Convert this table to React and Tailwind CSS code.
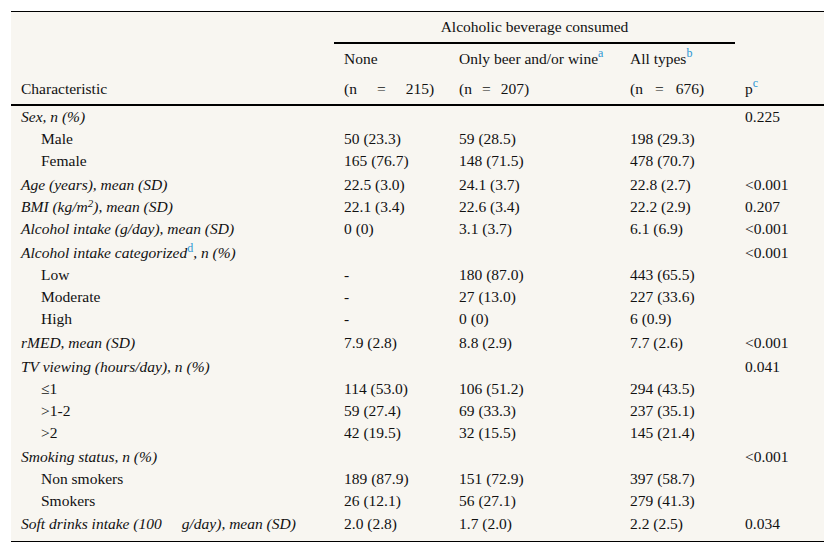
// Beverage table
const rows = [
    {label: "Sex, n (%)", italic: true, p: "0.225"},
    {label: "Male", v: ["50 (23.3)", "59 (28.5)", "198 (29.3)"]},
    {label: "Female", v: ["165 (76.7)", "148 (71.5)", "478 (70.7)"]},
    {label: "Age (years), mean (SD)", italic: true, gap: true, v: ["22.5 (3.0)", "24.1 (3.7)", "22.8 (2.7)"], p: "<0.001"},
    {label: <>BMI (kg/m<sup className="text-[11px]">2</sup>), mean (SD)</>, italic: true, v: ["22.1 (3.4)", "22.6 (3.4)", "22.2 (2.9)"], p: "0.207"},
    {label: "Alcohol intake (g/day), mean (SD)", italic: true, v: ["0 (0)", "3.1 (3.7)", "6.1 (6.9)"], p: "<0.001"},
    {label: <>Alcohol intake categorized<Note>d</Note>, n (%)</>, italic: true, gap: true, p: "<0.001"},
    {label: "Low", v: ["-", "180 (87.0)", "443 (65.5)"]},
    {label: "Moderate", v: ["-", "27 (13.0)", "227 (33.6)"]},
    {label: "High", v: ["-", "0 (0)", "6 (0.9)"]},
    {label: "rMED, mean (SD)", italic: true, gap: true, v: ["7.9 (2.8)", "8.8 (2.9)", "7.7 (2.6)"], p: "<0.001"},
    {label: "TV viewing (hours/day), n (%)", italic: true, gap: true, p: "0.041"},
    {label: "≤1", v: ["114 (53.0)", "106 (51.2)", "294 (43.5)"]},
    {label: ">1-2", v: ["59 (27.4)", "69 (33.3)", "237 (35.1)"]},
    {label: ">2", v: ["42 (19.5)", "32 (15.5)", "145 (21.4)"]},
    {label: "Smoking status, n (%)", italic: true, gap: true, p: "<0.001"},
    {label: "Non smokers", v: ["189 (87.9)", "151 (72.9)", "397 (58.7)"]},
    {label: "Smokers", v: ["26 (12.1)", "56 (27.1)", "279 (41.3)"]},
    {label: <>Soft drinks intake (100<span className="ml-[20px]">g/day), mean (SD)</span></>, italic: true, last: true, v: ["2.0 (2.8)", "1.7 (2.0)", "2.2 (2.5)"], p: "0.034"},
]

function Note({children}) {
    return <sup className="text-[12px] not-italic text-[#2a95d3]">{children}</sup>
}

const cols = "grid grid-cols-[323px_115px_171px_115px_89px]"

export default function App() {
    return (
        <div className="min-h-[553px] bg-white pt-[11px] pl-[11px] font-[family-name:Liberation_Serif,serif] text-[15.5px] text-[#111]">
            <div className="w-[813px] bg-[#f8f6f1] border-t border-b border-black">
                {/* header */}
                <div className={`${cols} border-b-2 border-black`}>
                    <div/>
                    <div className="col-span-3 h-[32px] border-b-2 border-black flex items-center justify-center">
                        Alcoholic beverage consumed
                    </div>
                    <div/>

                    <div className="h-[30px]"/>
                    <div className="h-[30px] flex items-center pl-[10px]">None</div>
                    <div className="h-[30px] flex items-center pl-[10px]">Only beer and/or wine<Note>a</Note></div>
                    <div className="h-[30px] flex items-center pl-[10px]">All types<Note>b</Note></div>
                    <div/>

                    <div className="h-[30px] flex items-center pl-[10px]">Characteristic</div>
                    <div className="h-[30px] flex items-center gap-[20px] pl-[10px]"><span>(n</span><span>=</span><span>215)</span></div>
                    <div className="h-[30px] flex items-center gap-[10px] pl-[10px]"><span>(n</span><span>=</span><span>207)</span></div>
                    <div className="h-[30px] flex items-center gap-[12px] pl-[10px]"><span>(n</span><span>=</span><span>676)</span></div>
                    <div className="h-[30px] flex items-center pl-[10px]">p<Note>c</Note></div>
                </div>

                {/* body */}
                {rows.map((r, i) => (
                    <div key={i} className={`${cols} ${r.gap ? "pt-[2px]" : ""} ${r.last ? "pt-px pb-[6px]" : ""}`}>
                        <div className={`h-[22px] flex items-center ${r.italic ? "italic pl-[10px]" : "pl-[30px]"}`}>
                            <span>{r.label}</span>
                        </div>
                        {[0, 1, 2].map((c) => (
                            <div key={c} className="h-[22px] flex items-center pl-[10px]">
                                {r.v ? r.v[c] : ""}
                            </div>
                        ))}
                        <div className="h-[22px] flex items-center pl-[10px]">{r.p || ""}</div>
                    </div>
                ))}
            </div>
        </div>
    )
}
